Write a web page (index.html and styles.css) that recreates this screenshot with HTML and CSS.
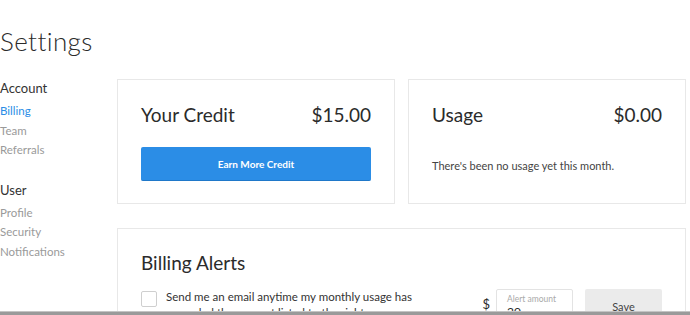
FILE: index.html
```html
<!DOCTYPE html>
<html lang="en">
<head>
    <meta charset="UTF-8">
    <title>Settings</title>
    <link rel="stylesheet" href="styles.css">
</head>
<body>
<h1 class="page-title">Settings</h1>
<div class="layout">
    <nav class="sidebar">
        <div class="nav-group">
            <div class="nav-heading">Account</div>
            <a class="nav-link active" href="#">Billing</a>
            <a class="nav-link" href="#">Team</a>
            <a class="nav-link" href="#">Referrals</a>
        </div>
        <div class="nav-group">
            <div class="nav-heading">User</div>
            <a class="nav-link" href="#">Profile</a>
            <a class="nav-link" href="#">Security</a>
            <a class="nav-link" href="#">Notifications</a>
        </div>
    </nav>
    <main class="content">
        <div class="cards">
            <section class="card">
                <div class="card-head">
                    <h2>Your Credit</h2>
                    <span class="amount">$15.00</span>
                </div>
                <button class="btn-primary">Earn More Credit</button>
            </section>
            <section class="card">
                <div class="card-head">
                    <h2>Usage</h2>
                    <span class="amount">$0.00</span>
                </div>
                <p class="note">There's been no usage yet this month.</p>
            </section>
        </div>
        <section class="card alerts">
            <h2>Billing Alerts</h2>
            <div class="alert-row">
                <span class="checkbox"></span>
                <p class="alert-text">Send me an email anytime my monthly usage has exceeded the amount listed to the right.</p>
                <span class="currency">$</span>
                <label class="amount-field">
                    <span class="field-label">Alert amount</span>
                    <span class="field-value">20</span>
                </label>
                <button class="btn-save">Save</button>
            </div>
        </section>
    </main>
</div>
<div class="bottom-bar"></div>
</body>
</html>
```

FILE: styles.css
```css
* {
    box-sizing: border-box;
}

body {
    margin: 0;
    padding: 0 4px 0 0;
    font-family: Lato, "Open Sans", sans-serif;
    color: #2b2b2b;
    background: #fff;
}

.page-title {
    margin: 0;
    padding-top: 25px;
    font-size: 26px;
    font-weight: 300;
    line-height: 32px;
    letter-spacing: 0.4px;
}

.layout {
    display: flex;
    margin-top: 22px;
}

.sidebar {
    width: 117px;
    flex-shrink: 0;
}

.nav-group {
    display: flex;
    flex-direction: column;
    margin-bottom: 21px;
}

.nav-heading {
    font-size: 13px;
    line-height: 18px;
    color: #333;
    margin-bottom: 4px;
}

.nav-link {
    font-size: 11.5px;
    line-height: 19.5px;
    color: #9a9a9a;
    text-decoration: none;
}

.nav-link.active {
    color: #2b8de6;
}

.content {
    flex: 1;
}

.cards {
    display: grid;
    grid-template-columns: 1fr 1fr;
    gap: 13px;
    margin-bottom: 24px;
}

.card {
    border: 1px solid #e8e8e8;
    padding: 23px 23px 22px;
}

.card h2 {
    margin: 0;
    font-size: 19px;
    font-weight: 400;
    line-height: 24px;
}

.card-head {
    display: flex;
    justify-content: space-between;
    align-items: center;
}

.amount {
    font-size: 19px;
    line-height: 24px;
}

.btn-primary {
    display: block;
    width: 100%;
    height: 34px;
    margin-top: 20px;
    border: none;
    border-bottom: 1px solid #1f78c9;
    border-radius: 2px;
    background: #2b8de6;
    color: #fff;
    font-family: inherit;
    font-size: 10px;
    font-weight: 700;
}

.note {
    margin: 31px 0 0;
    font-size: 11px;
    line-height: 16px;
    color: #444;
}

.alerts {
    padding-top: 22px;
    height: 120px;
}

.alert-row {
    display: flex;
    align-items: flex-start;
    margin-top: 14px;
}

.checkbox {
    width: 16px;
    height: 16px;
    margin-top: 2px;
    border: 1px solid #cfcfcf;
    border-radius: 2px;
    flex-shrink: 0;
}

.alert-text {
    width: 260px;
    margin: 0 0 0 9px;
    font-size: 11.5px;
    line-height: 16px;
    color: #333;
}

.currency {
    margin: 7px 6px 0 auto;
    font-size: 13px;
    line-height: 16px;
}

.amount-field {
    display: flex;
    flex-direction: column;
    width: 77px;
    height: 38px;
    padding: 4px 10px;
    border: 1px solid #e3e3e3;
    border-radius: 2px;
}

.field-label {
    font-size: 8.5px;
    line-height: 11px;
    color: #aaa;
}

.field-value {
    font-size: 12px;
    line-height: 14px;
}

.btn-save {
    width: 77px;
    height: 40px;
    margin-left: 12px;
    padding: 0 0 6px;
    border: none;
    border-radius: 2px;
    background: #ebebeb;
    color: #444;
    font-family: inherit;
    font-size: 11px;
}

.bottom-bar {
    position: fixed;
    left: 0;
    right: 0;
    bottom: 0;
    height: 4px;
    background: #9a9a9a;
    border-top: 1px solid #c4c4c4;
}
```
